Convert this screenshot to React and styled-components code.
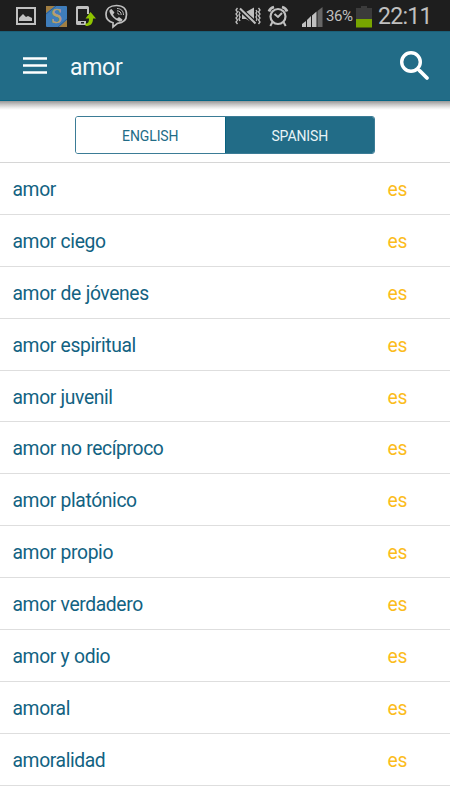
import React from 'react';
import styled, { createGlobalStyle } from 'styled-components';

const GlobalStyle = createGlobalStyle`
  * { box-sizing: border-box; }
  body { margin: 0; background: #fff; font-family: Roboto, "Noto Sans", sans-serif; overflow: hidden; }
`;

const Screen = styled.div`
  width: 450px;
  height: 800px;
  background: #fff;
  overflow: hidden;
`;

const StatusBar = styled.div`
  height: 31px;
  display: flex;
  align-items: center;
  background: #1e1e1e;
  color: #c0c0c0;
`;

const StatusIcon = styled.svg`
  display: block;
  flex: none;
  width: ${(p) => p.$w}px;
  height: 31px;
  margin-left: ${(p) => p.$gap || 0}px;
`;

const BatteryText = styled.span`
  width: 28px;
  margin-left: 3px;
  font-size: 15px;
  line-height: 31px;
  letter-spacing: -0.4px;
  padding-top: 2px;
  white-space: nowrap;
`;

const Clock = styled.span`
  margin-left: 6px;
  font-size: 23px;
  line-height: 31px;
  padding-top: 1px;
  letter-spacing: -0.7px;
`;

const Header = styled.header`
  height: 70px;
  display: flex;
  align-items: center;
  padding: 0 20px 1px 23px;
  background: #226c87;
  border-bottom: 1px solid #076584;
  box-shadow: inset 0 1px 0 #1b6078;
  color: #fff;
`;

const HeaderShadow = styled.div`
  height: 9px;
  background: linear-gradient(#979797, #c2c2c2 35%, #ececec 75%, #fff);
`;

const Query = styled.h1`
  flex: 1;
  margin: 0 0 0 23px;
  padding-top: 5px;
  font-size: 23px;
  line-height: 30px;
  font-weight: 400;
  letter-spacing: -0.3px;
  color: #f4fafc;
`;

const IconButton = styled.button`
  padding: 0;
  border: 0;
  background: none;
  color: inherit;
  display: block;
  height: 32px;
  svg { display: block; }
`;

const TabBar = styled.div`
  height: 53px;
  display: flex;
  justify-content: center;
  align-items: flex-start;
  padding-top: 6px;
  border-bottom: 1px solid #d6d6d6;
`;

const Segments = styled.div`
  display: flex;
  width: 300px;
  height: 38px;
  border: 1px solid #3b7c96;
  border-radius: 3px;
  overflow: hidden;
`;

const Segment = styled.button`
  flex: 1;
  padding: 1px 0 0 ${(p) => (p.$active ? 1 : 0)}px;
  border: 0;
  font: 400 14px Roboto, sans-serif;
  letter-spacing: -0.1px;
  background: ${(p) => (p.$active ? '#226c87' : '#fff')};
  color: ${(p) => (p.$active ? '#e9f4f7' : '#226c87')};
  box-shadow: ${(p) => (p.$active ? 'inset 1px 0 0 #07617f' : 'none')};
`;

const List = styled.ul`
  margin: 0;
  padding: 0;
  list-style: none;
`;

const Row = styled.li`
  height: 51.9px;
  display: flex;
  align-items: center;
  justify-content: space-between;
  padding: 2.200px 43px 0 12.500px;
  border-bottom: 1px solid #dedede;
  font-size: 19.300px;
  line-height: 23px;
  letter-spacing: -0.38px;
  word-spacing: 0.3px;
  color: #126282;
`;

const Lang = styled.span`
  color: #fbbc1c;
`;

const WORDS = [
  'amor', 'amor ciego', 'amor de jóvenes', 'amor espiritual', 'amor juvenil',
  'amor no recíproco', 'amor platónico', 'amor propio', 'amor verdadero',
  'amor y odio', 'amoral', 'amoralidad',
];

const PictureIcon = () => (
  <StatusIcon $w={20} $gap={16} viewBox="0 0 20 31">
    <path fill="#c0c0c0" fillRule="evenodd" d="M0 7h20v18H0zM2 9v14h16V9z" />
    <path fill="#c0c0c0" d="M3 21v-3l4-4 3 3 2-1 4 2v3z" />
  </StatusIcon>
);

const SlovoedIcon = () => (
  <StatusIcon $w={21} $gap={10} viewBox="0 0 21 31">
    <rect y="6" width="21" height="21" rx="1" fill="#3f7dbb" />
    <path fill="#a17e42" d="M0 6h9L0 13zM21 27h-8l8-7z" />
    <path stroke="#2d5e94" strokeWidth="1" d="M0 14L10 6M12 27l9-8" />
    <text x="10.5" y="23" textAnchor="middle" fontFamily="Liberation Serif" fontSize="20" fill="#b9a06a" stroke="#b9a06a" strokeWidth=".5">S</text>
  </StatusIcon>
);

const TransferIcon = () => (
  <StatusIcon $w={21} $gap={9} viewBox="0 0 21 31">
    <path fill="#c0c0c0" fillRule="evenodd" d="M1.500 6h10Q13 6 13 7.500V14h-2V9H2v12h8v4H1.500Q0 25 0 23.500v-16Q0 6 1.500 6zM5 22v1.500h3V22z" />
    <path fill="#8fc400" d="M14.500 12l5.500 6.500h-3c0 5-2 7.500-7.500 7.500v-2.500c3 0 3.500-2 3.500-5H9.500z" />
  </StatusIcon>
);

const ViberIcon = () => (
  <StatusIcon $w={23} $gap={8} viewBox="0 0 23 31" fill="none" stroke="#c0c0c0">
    <path strokeWidth="1.700" d="M11.500 5.500C18 5.500 21.500 9 21.500 14.500S18 23 12.500 23.300L8 27v-4.300C3.500 21.500 1 18.800 1 14.500c0-5.500 4-9 10.500-9z" />
    <path fill="#c0c0c0" stroke="none" d="M6.500 9l3 3.500-1.500 2c1 2 2.200 3 4 4l2-1.500 3.500 2.500c-.5 2-2 2.500-3.500 2C9.500 19.500 6 16 4.500 12c-.4-1.500.5-2.700 2-3z" />
    <path strokeWidth="1" d="M12 8.500c4 0 6.500 2.500 6.500 6.500M12 10.800c2.700 0 4.200 1.500 4.200 4.200M12 13c1.200 0 2 .8 2 2" />
  </StatusIcon>
);

const VibrateMuteIcon = () => (
  <StatusIcon $w={26} $gap={107} viewBox="0 0 26 31" fill="none" stroke="#c0c0c0">
    <path strokeWidth="1.300" d="M2.500 8L1 10l1.500 2L1 14l1.500 2L1 18l1.500 2L1 22l1.500 2M5 10l-1 1.500L5 13l-1 2 1 2-1 2 1 2M23.500 8l1.500 2-1.500 2 1.500 2-1.500 2 1.500 2-1.500 2 1.500 2-1.500 2M21 10l1 1.500-1 1.500 1 2-1 2 1 2-1 2" />
    <path fill="#c0c0c0" stroke="none" d="M7 12h4l8-4.500v16L11 19H7z" />
    <path stroke="#1e1e1e" strokeWidth="4.500" d="M5 9l15 14" />
    <path strokeWidth="2" d="M5 8.500l15.500 15" />
  </StatusIcon>
);

const AlarmIcon = () => (
  <StatusIcon $w={22} $gap={6} viewBox="0 0 22 31" fill="none" stroke="#c0c0c0">
    <circle cx="11" cy="16.500" r="7.500" strokeWidth="2.200" />
    <path strokeWidth="2.800" d="M2 11.500Q3 8 7 7M20 11.500Q19 8 15 7" />
    <path strokeWidth="2" d="M7.500 14l3.500 3 4-4M5.500 22l-2.200 4M16.500 22l2.200 4" />
  </StatusIcon>
);

const SignalIcon = () => (
  <StatusIcon $w={21} $gap={13} viewBox="0 0 21 31" fill="#c0c0c0">
    <path d="M0 27v-3l4-3v6zM5 27v-7l4-4v11zM10 27V15.500l4.500-4V27z" />
    <path fill="#666" d="M15.500 27V11L20.500 7v20z" />
  </StatusIcon>
);

const BatteryIcon = () => (
  <StatusIcon $w={16} $gap={2} viewBox="0 0 16 31">
    <path fill="#3b3b3b" d="M5 6h6v2h5v11H0V8h5z" />
    <path fill="#78a500" d="M0 19h16v8.500H0z" />
  </StatusIcon>
);

export default function App() {
  return (
    <Screen>
      <GlobalStyle />
      <StatusBar>
        <PictureIcon />
        <SlovoedIcon />
        <TransferIcon />
        <ViberIcon />
        <VibrateMuteIcon />
        <AlarmIcon />
        <SignalIcon />
        <BatteryText>36%</BatteryText>
        <BatteryIcon />
        <Clock>22:11</Clock>
      </StatusBar>
      <Header>
        <IconButton aria-label="Menu">
          <svg width="24" height="32" viewBox="0 0 24 32" fill="#fff">
            <path d="M0 8.300h24v2.500H0zM0 15.300h24v2.500H0zM0 22.300h24v2.500H0z" />
          </svg>
        </IconButton>
        <Query>amor</Query>
        <IconButton aria-label="Search">
          <svg width="30" height="32" viewBox="0 0 30 32" fill="none" stroke="#fff">
            <circle cx="11" cy="13" r="9.300" strokeWidth="3.400" />
            <path d="M17.500 20l2 2" strokeWidth="3" />
            <path d="M20 22l7 7" strokeWidth="3.800" strokeLinecap="round" />
          </svg>
        </IconButton>
      </Header>
      <HeaderShadow />
      <TabBar>
        <Segments>
          <Segment>ENGLISH</Segment>
          <Segment $active>SPANISH</Segment>
        </Segments>
      </TabBar>
      <List>
        {WORDS.map((word) => (
          <Row key={word}>
            <span>{word}</span>
            <Lang>es</Lang>
          </Row>
        ))}
      </List>
    </Screen>
  );
}
